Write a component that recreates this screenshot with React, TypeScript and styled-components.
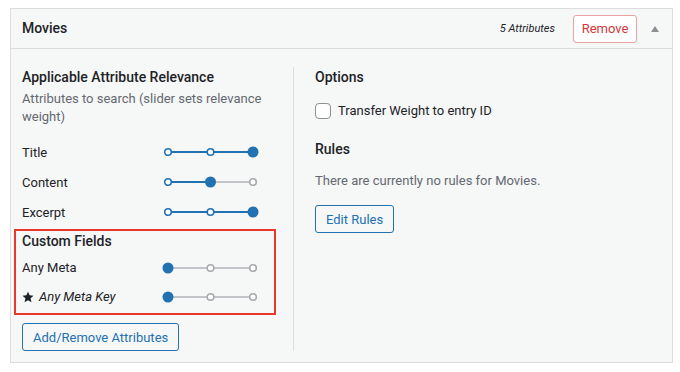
import styled, { createGlobalStyle } from 'styled-components';

const GlobalStyle = createGlobalStyle`
  body {
    margin: 0;
    background: #fff;
    font-family: Roboto, "Liberation Sans", sans-serif;
    color: #1d2327;
  }
`;

type Attr = { label: string; level: number; italic?: boolean; star?: boolean };

const base: Attr[] = [
  { label: 'Title', level: 2 },
  { label: 'Content', level: 1 },
  { label: 'Excerpt', level: 2 },
];

const custom: Attr[] = [
  { label: 'Any Meta', level: 0 },
  { label: 'Any Meta Key', level: 0, italic: true, star: true },
];

// three-stop relevance slider, drawn
const Slider = ({ level }: { level: number }) => {
  const xs = [6, 48.5, 91];
  const blue = '#2271b1';
  const grey = '#c3c4c7';
  const end = xs[level];
  return (
    <svg width="100" height="14" viewBox="0 0 100 14">
      <line x1={end} y1="7" x2={xs[2]} y2="7" stroke={grey} strokeWidth="2" />
      {level > 0 && <line x1={xs[0]} y1="7" x2={end} y2="7" stroke={blue} strokeWidth="2" />}
      {xs.map((x, i) =>
        i === level ? (
          <circle key={i} cx={x} cy="7" r="5.5" fill={blue} />
        ) : (
          <circle
            key={i}
            cx={x}
            cy="7"
            r="3.3"
            fill="#fff"
            stroke={i < level ? blue : '#a7aaad'}
            strokeWidth="1.6"
          />
        ),
      )}
    </svg>
  );
};

const Star = () => (
  <svg width="12" height="12" viewBox="0 0 24 24">
    <path
      d="M12 1.5l3.2 7.1 7.8.8-5.8 5.2 1.7 7.7L12 18.4l-6.9 3.9 1.7-7.7L1 9.4l7.8-.8z"
      fill="#1d2327"
    />
  </svg>
);

const AttrRow = ({ a, h }: { a: Attr; h: number }) => (
  <Row $h={h}>
    <Label $italic={a.italic}>
      {a.star && <Star />}
      {a.label}
    </Label>
    <Slider level={a.level} />
  </Row>
);

export default function App() {
  return (
    <>
      <GlobalStyle />
      <Page>
        <Panel>
          <Header>
            <Title>Movies</Title>
            <HeaderRight>
              <Count>5 Attributes</Count>
              <RemoveButton>Remove</RemoveButton>
              <Toggle />
            </HeaderRight>
          </Header>
          <Body>
            <LeftCol>
              <Heading>Applicable Attribute Relevance</Heading>
              <Description>Attributes to search (slider sets relevance weight)</Description>
              <Rows>
                {base.map((a) => (
                  <AttrRow key={a.label} a={a} h={30} />
                ))}
              </Rows>
              <CustomBox>
                <Heading>Custom Fields</Heading>
                <Rows $top={2}>
                  {custom.map((a) => (
                    <AttrRow key={a.label} a={a} h={29} />
                  ))}
                </Rows>
              </CustomBox>
              <Button $top={8}>Add/Remove Attributes</Button>
            </LeftCol>
            <RightCol>
              <Heading>Options</Heading>
              <CheckRow>
                <Checkbox />
                <span>Transfer Weight to entry ID</span>
              </CheckRow>
              <Heading $top={19}>Rules</Heading>
              <Description $top={13}>There are currently no rules for Movies.</Description>
              <Button $top={15}>Edit Rules</Button>
            </RightCol>
          </Body>
        </Panel>
      </Page>
    </>
  );
}

const Page = styled.div`
  padding: 8px 0 0 10px;
`;

const Panel = styled.div`
  width: 663px;
  box-sizing: border-box;
  border: 1px solid #dcdcde;
  background: #f6f7f7;
`;

const Header = styled.div`
  height: 39px;
  display: flex;
  align-items: center;
  justify-content: space-between;
  padding: 0 12px 0 11px;
  border-bottom: 1px solid #dcdcde;
`;

const Title = styled.div`
  font-size: 14px;
  font-weight: 500;
  margin-top: -1px;
`;

const HeaderRight = styled.div`
  display: flex;
  align-items: center;
`;

const Count = styled.span`
  font-size: 11px;
  font-style: italic;
  color: #1d2327;
  margin-right: 18px;
`;

const RemoveButton = styled.button`
  height: 28px;
  width: 64px;
  box-sizing: border-box;
  border: 1px solid #e5a3a4;
  border-radius: 3px;
  background: #fff;
  color: #d63638;
  font-family: inherit;
  font-size: 13px;
  padding: 0;
  margin-right: 13px;
`;

const Toggle = styled.span`
  width: 0;
  height: 0;
  border-left: 4px solid transparent;
  border-right: 4px solid transparent;
  border-bottom: 6px solid #8c8f94;
  margin: 0 1px;
`;

const Body = styled.div`
  display: flex;
  padding: 18px 0 11px 11px;
`;

const LeftCol = styled.div`
  width: 250px;
  padding-right: 21px;
  border-right: 1px solid #dcdcde;
  display: flex;
  flex-direction: column;
  align-items: flex-start;
`;

const RightCol = styled.div`
  padding-left: 21px;
  display: flex;
  flex-direction: column;
  align-items: flex-start;
`;

const Heading = styled.div<{ $top?: number }>`
  font-size: 14px;
  line-height: 20px;
  font-weight: 500;
  margin-top: ${(p) => p.$top ?? 0}px;
`;

const Description = styled.div<{ $top?: number }>`
  font-size: 13px;
  line-height: 18px;
  color: #646970;
  margin-top: ${(p) => p.$top ?? 3}px;
`;

const Rows = styled.div<{ $top?: number }>`
  margin-top: ${(p) => p.$top ?? 11}px;
`;

const Row = styled.div<{ $h: number }>`
  display: grid;
  grid-template-columns: 140px 100px;
  align-items: center;
  height: ${(p) => p.$h}px;
`;

const Label = styled.span<{ $italic?: boolean }>`
  display: flex;
  align-items: center;
  gap: 5px;
  font-size: 13px;
  font-style: ${(p) => (p.$italic ? 'italic' : 'normal')};
`;

const CustomBox = styled.div`
  margin: 2px 0 0 -8px;
  width: 262px;
  box-sizing: border-box;
  border: 2px solid #e8392c;
  padding: 0 6px 2px;
`;

const Button = styled.button<{ $top?: number }>`
  margin-top: ${(p) => p.$top ?? 0}px;
  height: 28px;
  padding: 0 10px;
  border: 1px solid #2271b1;
  border-radius: 3px;
  background: #f6f7f7;
  color: #2271b1;
  font-family: inherit;
  font-size: 13px;
`;

const CheckRow = styled.label`
  display: flex;
  align-items: center;
  gap: 7px;
  margin-top: 15px;
  font-size: 13px;
  line-height: 18px;
`;

const Checkbox = styled.span`
  width: 16px;
  height: 16px;
  box-sizing: border-box;
  border: 1px solid #8c8f94;
  border-radius: 4px;
  background: #fff;
`;
